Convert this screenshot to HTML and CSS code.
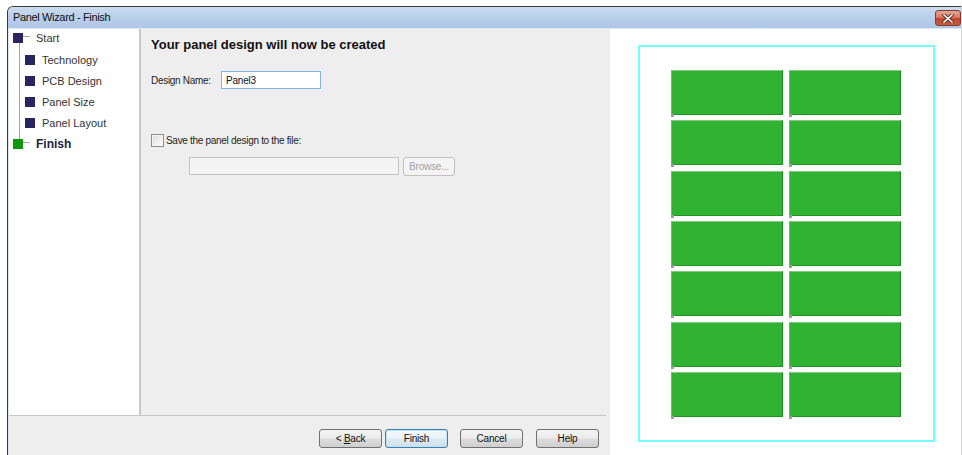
FILE: index.html
```html
<!DOCTYPE html>
<html lang="en">
<head>
<meta charset="utf-8">
<title>Panel Wizard - Finish</title>
<link rel="stylesheet" href="styles.css">
</head>
<body>
<div class="window">
  <div class="titlebar">
    <span class="title">Panel Wizard - Finish</span>
    <button class="close" type="button" aria-label="Close">
      <svg width="12" height="9" viewBox="0 0 12 9">
        <path d="M2 1 L10 8 M10 1 L2 8" stroke="#5a2a20" stroke-width="3.2" stroke-linecap="square"/>
        <path d="M2 1 L10 8 M10 1 L2 8" stroke="#ffffff" stroke-width="1.6" stroke-linecap="square"/>
      </svg>
    </button>
  </div>
  <div class="body">
    <div class="left">
      <div class="top">
        <nav class="sidebar">
          <div class="step root">
            <span class="sq"></span><span class="link"></span><span class="label">Start</span>
          </div>
          <div class="sub">
            <div class="step"><span class="sq"></span><span class="label">Technology</span></div>
            <div class="step"><span class="sq"></span><span class="label">PCB Design</span></div>
            <div class="step"><span class="sq"></span><span class="label">Panel Size</span></div>
            <div class="step"><span class="sq"></span><span class="label">Panel Layout</span></div>
          </div>
          <div class="step root current">
            <span class="sq"></span><span class="link"></span><span class="label">Finish</span>
          </div>
        </nav>
        <section class="main">
          <h1 class="heading">Your panel design will now be created</h1>
          <div class="name-row">
            <label class="name-label" for="design-name">Design Name:</label>
            <input class="name-input" id="design-name" type="text" value="Panel3">
          </div>
          <div class="check-row">
            <input class="check" type="checkbox" id="save-file">
            <label class="check-label" for="save-file">Save the panel design to the file:</label>
          </div>
          <div class="file-row">
            <input class="file-input" type="text" disabled>
            <button class="browse" type="button" disabled>Browse...</button>
          </div>
        </section>
      </div>
      <div class="rule"></div>
      <div class="buttons">
        <button class="btn back" type="button">&lt; <u>B</u>ack</button>
        <button class="btn finish" type="button">Finish</button>
        <button class="btn cancel" type="button">Cancel</button>
        <button class="btn help" type="button">Help</button>
      </div>
    </div>
    <div class="preview">
      <div class="outline">
        <div class="boards">
          <div class="board"></div><div class="board"></div>
          <div class="board"></div><div class="board"></div>
          <div class="board"></div><div class="board"></div>
          <div class="board"></div><div class="board"></div>
          <div class="board"></div><div class="board"></div>
          <div class="board"></div><div class="board"></div>
          <div class="board"></div><div class="board"></div>
        </div>
      </div>
    </div>
  </div>
</div>
</body>
</html>
```

FILE: styles.css
```css
* {
  box-sizing: border-box;
}

html, body {
  margin: 0;
  padding: 0;
  background: #ffffff;
  overflow: hidden;
}

body {
  width: 962px;
  height: 455px;
  font-family: "Liberation Sans", Arial, sans-serif;
  color: #1e1e1e;
}

/* dialog frame */
.window {
  margin: 6px 0 0 7px;
  width: 955px;
  height: 449px;
  border-top: 1px solid #3b3b3b;
  border-left: 1px solid #3b3b3b;
  border-right: 1px solid #d6d6d6;
  border-top-left-radius: 6px;
  overflow: hidden;
  background: #eeeeee;
}

.titlebar {
  height: 22px;
  display: flex;
  justify-content: space-between;
  align-items: flex-start;
  background: linear-gradient(#cddcee, #b9cfe9 45%, #aec7e6);
  border-bottom: 1px solid #e4e9ef;
}

.title {
  padding: 4px 0 0 5px;
  font-size: 11px;
  letter-spacing: -0.35px;
  line-height: 13px;
  color: #101010;
}

.close {
  margin-top: 3px;
  width: 26px;
  height: 16px;
  padding: 0;
  border: 1px solid #7a3c36;
  border-radius: 3px;
  background: linear-gradient(#e9a594, #d77a64 45%, #c0432a 55%, #c85e45);
  display: flex;
  align-items: center;
  justify-content: center;
}

.close svg {
  display: block;
}

.body {
  display: flex;
  height: 426px;
  border-left: 1px solid #dce6f2;
}

.left {
  width: 601px;
  display: flex;
  flex-direction: column;
  background: #eeeeee;
}

.top {
  display: flex;
  height: 386px;
}

/* step tree */
.sidebar {
  width: 132px;
  background: #ffffff;
  border-right: 2px solid #c8c8c8;
  padding: 4px 0 0 4px;
}

.step {
  display: flex;
  align-items: center;
  font-size: 11px;
  color: #333333;
}

.sq {
  width: 10px;
  height: 10px;
  flex: none;
  background: #2a2460;
}

.step.root {
  height: 10px;
}

.step.root .link {
  width: 7px;
  height: 1px;
  margin-top: -4px;
  background: #a6a6a6;
  flex: none;
}

.step.root .label {
  margin-left: 6px;
}

.sub {
  margin-left: 6px;
  border-left: 1px solid #a6a6a6;
  padding: 6px 0 6px 5px;
}

.sub .step {
  height: 21px;
}

.sub .label {
  margin-left: 7px;
}

.step.current .sq {
  background: #0c980c;
}

.step.current .label {
  font-weight: bold;
  font-size: 12px;
  color: #23234a;
}

/* page content */
.main {
  flex: 1;
  padding: 8px 0 0 10px;
}

.heading {
  margin: 0;
  font-size: 13px;
  line-height: 16px;
  font-weight: bold;
  color: #111111;
}

.name-row {
  display: flex;
  align-items: center;
  margin-top: 18px;
}

.name-label,
.check-label {
  font-size: 10px;
  letter-spacing: -0.3px;
  color: #1e1e1e;
}

.name-label {
  width: 70px;
}

.name-input {
  width: 100px;
  height: 18px;
  margin: 0;
  padding: 0 0 0 4px;
  border: 1px solid #86b5e6;
  background: #ffffff;
  font-family: inherit;
  font-size: 10px;
  letter-spacing: -0.2px;
  color: #111111;
  outline: none;
}

.check-row {
  display: flex;
  align-items: center;
  margin-top: 45px;
}

.check {
  appearance: none;
  -webkit-appearance: none;
  width: 13px;
  height: 13px;
  margin: 0 2px 0 0;
  border: 1px solid #8e8f8f;
  background: linear-gradient(135deg, #dcdcdc, #f4f4f4 70%, #ffffff);
  box-shadow: inset 0 0 0 1px #f4f4f4;
}

.file-row {
  display: flex;
  align-items: flex-start;
  margin-top: 10px;
  padding-left: 38px;
}

.file-input {
  width: 210px;
  height: 18px;
  margin: 0;
  border: 1px solid #c4c4c4;
  background: #f4f4f4;
}

.browse {
  width: 52px;
  height: 19px;
  margin-left: 4px;
  padding: 0;
  border: 1px solid #c0c0c0;
  border-radius: 3px;
  background: #f4f4f4;
  font-family: inherit;
  font-size: 10px;
  letter-spacing: -0.2px;
  color: #a3a3a3;
}

/* command buttons */
.rule {
  height: 1px;
  margin-right: 4px;
  background: #c6c6c6;
}

.buttons {
  flex: 1;
  display: flex;
  justify-content: flex-end;
  align-items: flex-start;
  padding: 13px 11px 0 0;
}

.btn {
  width: 63px;
  height: 19px;
  padding: 0;
  border: 1px solid #707070;
  border-radius: 3px;
  background: linear-gradient(#f3f3f3, #ebebeb 48%, #dddddd 52%, #cfcfcf);
  font-family: inherit;
  font-size: 10px;
  letter-spacing: -0.2px;
  color: #111111;
}

.btn u {
  text-decoration: underline;
}

.btn.finish {
  margin-left: 3px;
  border-color: #3c7fb1;
  box-shadow: inset 0 0 0 1px #bfe3f8;
  background: linear-gradient(#f4f9fc, #e9f3f9 48%, #dbe9f2 52%, #cfe0ec);
}

.btn.cancel {
  margin-left: 12px;
}

.btn.help {
  margin-left: 13px;
}

/* layout preview */
.preview {
  width: 351px;
  background: #ffffff;
  padding: 16px 0 0 28px;
}

.outline {
  width: 297px;
  height: 397px;
  border: 2px solid #74ffff;
  padding: 23px 0 0 31px;
}

.boards {
  display: grid;
  grid-template-columns: 112px 112px;
  grid-template-rows: repeat(7, 45px);
  column-gap: 6px;
  row-gap: 5.33px;
}

.board {
  position: relative;
  background: #32b232;
  border-top: 1px solid #86c886;
  border-left: 1px solid #9a9a9a;
  border-right: 1px solid #16901a;
  border-bottom: 1px solid #1d961f;
}

.board::after {
  content: "";
  position: absolute;
  left: -1px;
  bottom: -3px;
  width: 3px;
  height: 3px;
  background: #9c9c9c;
}
```
